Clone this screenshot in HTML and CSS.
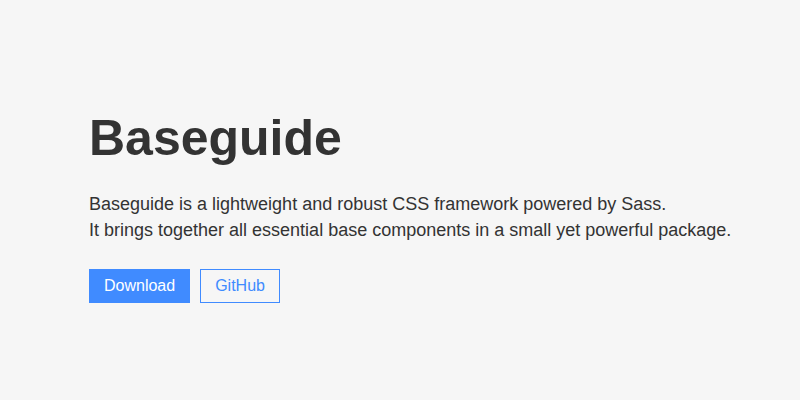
FILE: index.html
```html
<!DOCTYPE html>
<html>
<head>
<meta charset="utf-8">
<link rel="stylesheet" href="styles.css">
</head>
<body>
<main class="hero">
  <h1 class="title">Baseguide</h1>
  <p class="lead">Baseguide is a lightweight and robust CSS framework powered by Sass.<br>It brings together all essential base components in a small yet powerful package.</p>
  <div class="actions">
    <a class="btn btn-primary" href="#">Download</a>
    <a class="btn btn-outline" href="#">GitHub</a>
  </div>
</main>
</body>
</html>
```
FILE: styles.css
```css
html, body {
  margin: 0;
  height: 100%;
  background: #f6f6f6;
}
body {
  font-family: "Liberation Sans", Arial, sans-serif;
  color: #333;
}
.hero {
  padding: 113px 0 0 89px;
}
.title {
  font-size: 50px;
  font-weight: bold;
  line-height: 1;
  margin: 0 0 28px;
}
.lead {
  font-size: 18px;
  line-height: 26px;
  margin: 0 0 26px;
}
.actions {
  display: flex;
  gap: 10px;
}
.btn {
  display: inline-block;
  font-size: 16px;
  line-height: 32px;
  padding: 0 14px;
  border: 1px solid #408bff;
  text-decoration: none;
}
.btn-primary {
  background: #408bff;
  color: #fff;
}
.btn-outline {
  background: transparent;
  color: #408bff;
}
```
